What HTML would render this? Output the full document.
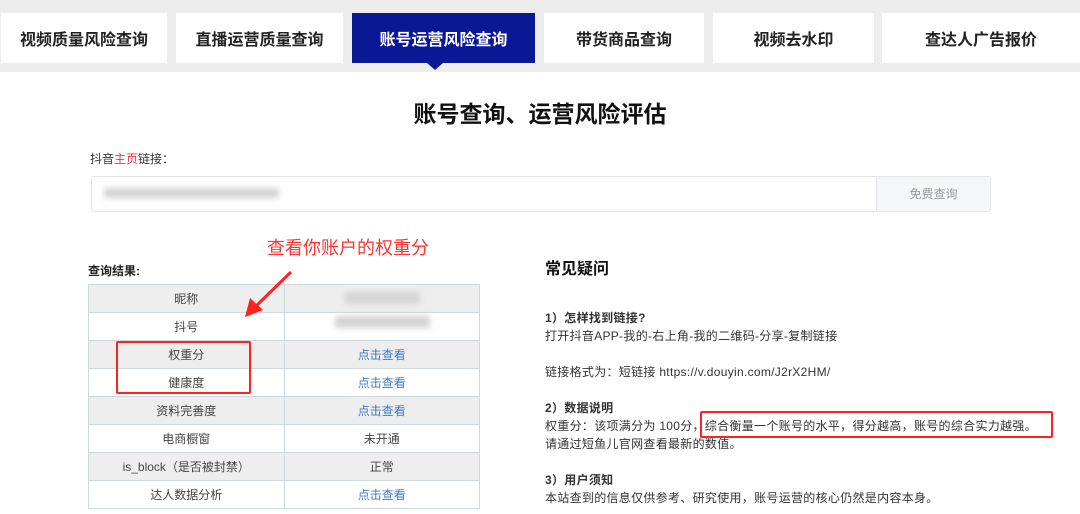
<!DOCTYPE html>
<html><head><meta charset="utf-8"><style>
*{margin:0;padding:0;box-sizing:border-box}
body{width:1080px;height:514px;overflow:hidden;background:#fff;font-family:"Liberation Sans","Noto Sans CJK SC",sans-serif;position:relative;color:#333}
.top{position:absolute;left:0;top:0;width:1080px;height:72px;background:#ededed}
.tab{position:absolute;top:13px;height:50px;background:#fff;font-size:16px;font-weight:bold;color:#222;display:flex;align-items:center;justify-content:center}
.act{background:#0a1896;color:#fff}
.abs{position:absolute}
table{position:absolute;left:88px;top:284px;width:392px;border-collapse:collapse;font-size:12px}
td{border:1px solid #cdd9dc;height:28px;text-align:center;color:#444;width:50%}
tr:nth-child(odd) td{background:#eeeeee}
.lk{color:#3a7cc4}
.r p{font-size:12px;line-height:18px;color:#333;letter-spacing:0.3px}
.blur{position:absolute;background:#d4d4d4;filter:blur(3px)}
</style></head><body>
<div class="top"></div>
<div class="tab" style="left:1px;width:166px">视频质量风险查询</div>
<div class="tab" style="left:176px;width:167px">直播运营质量查询</div>
<div class="tab act" style="left:352px;width:183px">账号运营风险查询</div>
<div class="abs" style="left:427px;top:63px;width:0;height:0;border-left:8px solid transparent;border-right:8px solid transparent;border-top:7px solid #0a1896"></div>
<div class="tab" style="left:544px;width:160px">带货商品查询</div>
<div class="tab" style="left:713px;width:161px">视频去水印</div>
<div class="tab" style="left:882px;width:198px">查达人广告报价</div>

<div class="abs" style="left:0;width:1080px;top:95px;text-align:center;font-size:23px;font-weight:bold;color:#111">账号查询、运营风险评估</div>
<div class="abs" style="left:90px;top:150px;font-size:12px;color:#333">抖音<span style="color:#f33">主页</span>链接：</div>
<div class="abs" style="left:91px;top:176px;width:900px;height:36px;border:1px solid #e3e5ea;border-radius:3px"></div>
<div class="blur" style="left:104px;top:188px;width:175px;height:10px"></div>
<div class="abs" style="left:876px;top:177px;width:114px;height:34px;background:#f5f6f8;border-left:1px solid #e3e5ea;font-size:12px;color:#999;text-align:center;line-height:34px">免费查询</div>

<div class="abs" style="left:267px;top:234px;font-size:18px;color:#f33">查看你账户的权重分</div>
<div class="abs" style="left:88px;top:262px;font-size:12px;font-weight:bold;color:#222">查询结果:</div>
<table>
<tr><td>昵称</td><td></td></tr>
<tr><td>抖号</td><td></td></tr>
<tr><td>权重分</td><td class="lk">点击查看</td></tr>
<tr><td>健康度</td><td class="lk">点击查看</td></tr>
<tr><td>资料完善度</td><td class="lk">点击查看</td></tr>
<tr><td>电商橱窗</td><td>未开通</td></tr>
<tr><td>is_block（是否被封禁）</td><td>正常</td></tr>
<tr><td>达人数据分析</td><td class="lk">点击查看</td></tr>
</table>
<div class="blur" style="left:345px;top:292px;width:75px;height:12px"></div>
<div class="blur" style="left:335px;top:316px;width:95px;height:12px"></div>
<div class="abs" style="left:116px;top:341px;width:135px;height:53px;border:2px solid #f22;border-radius:2px"></div>
<svg class="abs" style="left:240px;top:268px" width="56" height="56"><line x1="51" y1="4" x2="14" y2="40" stroke="#f22" stroke-width="3"/><polygon points="5,49 10,30 23,42" fill="#f22"/></svg>

<div class="r abs" style="left:545px;top:260px;width:535px">
<div style="font-size:16px;font-weight:bold;color:#111;line-height:20px">常见疑问</div>
<p style="margin-top:29px;font-weight:bold">1）怎样找到链接?</p>
<p>打开抖音APP-我的-右上角-我的二维码-分享-复制链接</p>
<p style="margin-top:18px">链接格式为：短链接 https://v.douyin.com/J2rX2HM/</p>
<p style="margin-top:18px;font-weight:bold">2）数据说明</p>
<p>权重分：该项满分为 100分，综合衡量一个账号的水平，得分越高，账号的综合实力越强。</p>
<p>请通过短鱼儿官网查看最新的数值。</p>
<p style="margin-top:18px;font-weight:bold">3）用户须知</p>
<p>本站查到的信息仅供参考、研究使用，账号运营的核心仍然是内容本身。</p>
</div>
<div class="abs" style="left:700px;top:411px;width:353px;height:27px;border:2px solid #f22;border-radius:2px"></div>
</body></html>
